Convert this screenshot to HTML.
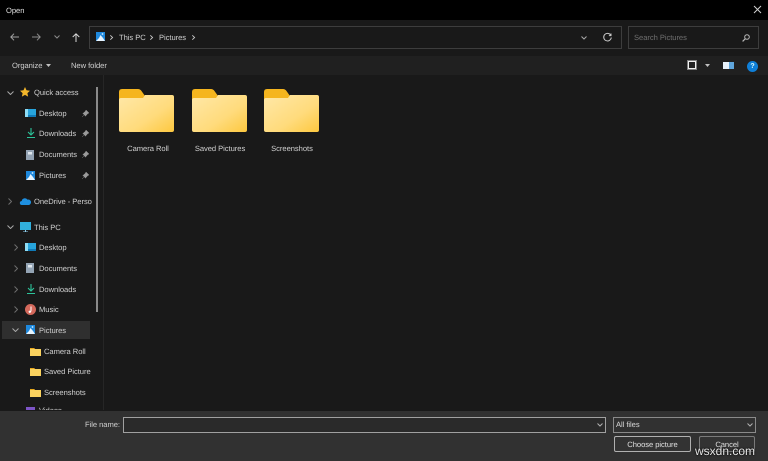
<!DOCTYPE html>
<html><head><meta charset="utf-8"><style>
html,body{margin:0;padding:0;background:#191919}
body{width:768px;height:461px;overflow:hidden;position:relative;font-family:"Liberation Sans",sans-serif;font-size:7.6px;letter-spacing:-.05px;text-rendering:geometricPrecision;color:#d0d0d0}
.a{position:absolute}
.t{position:absolute;white-space:nowrap;line-height:13.500px}
svg{position:absolute;overflow:visible}
</style></head><body>
<svg width="0" height="0" style="position:absolute"><defs>
<linearGradient id="fg" x1="0" y1="0" x2="1" y2="1"><stop offset="0" stop-color="#ffe8a8"/><stop offset=".6" stop-color="#ffdb7c"/><stop offset="1" stop-color="#fdc83f"/></linearGradient>
<symbol id="folder" viewBox="0 0 55 43"><path d="M0 3q0-3 3-3h16q2 0 3.500 2l3.500 5v5H0z" fill="#f5b51e"/><path d="M0 11q0-2 2-2h22l2-3h27q2 0 2 2v33q0 2-2 2H2q-2 0-2-2z" fill="url(#fg)"/></symbol>
<symbol id="sf" viewBox="0 0 11 9"><path d="M0 1h4l1 1h6v7H0z" fill="#fbd25f"/><path d="M0 1h4l1 1H0z" fill="#e9a91c"/></symbol>
<symbol id="desk" viewBox="0 0 11 8"><rect width="11" height="8" fill="#27a4dc"/><rect width="3" height="8" fill="#8edcf4"/><rect x="3" y="6" width="8" height="2" fill="#0f7ab8"/></symbol>
<symbol id="dl" viewBox="0 0 10 10"><path d="M5 0v7M2 4l3 3 3-3M1 9.500h8" fill="none" stroke="#2cc39a" stroke-width="1.100"/></symbol>
<symbol id="doc" viewBox="0 0 8 10"><rect width="8" height="10" fill="#94a4b4"/><rect x="2" y="2" width="4" height="2.500" fill="#dfe7ee"/></symbol>
<symbol id="pic" viewBox="0 0 9 9"><rect width="9" height="9" fill="#1e88dc"/><path d="M0 9l3-3 1.500-3L7 6l2 3z" fill="#e8f5ff"/><circle cx="6.500" cy="2" r=".9" fill="#cfeaff"/></symbol>
<symbol id="pin" viewBox="0 0 7 7"><path d="M4 0l3 3-1.300.6L4 5.500 3.600 6.200 .8 3.400 1.500 3 3.400 1.300zM2 5L0 7" fill="#9a9a9a" stroke="#9a9a9a" stroke-width=".4"/></symbol>
<symbol id="cd" viewBox="0 0 7 4"><path d="M.5 .5L3.500 3.500 6.500 .5" fill="none" stroke="#a8a8a8" stroke-width="1"/></symbol>
<symbol id="cr" viewBox="0 0 4 7"><path d="M.5 .5L3.500 3.500 .5 6.500" fill="none" stroke="#6d6d6d" stroke-width="1"/></symbol>
</defs></svg>

<!-- title -->
<div class="a" style="left:0;top:0;width:768px;height:20px;background:#000"></div>
<div class="t" style="left:6px;top:4px;color:#e0e0e0">Open</div>
<svg style="left:754px;top:6px" width="7" height="7"><path d="M0 0L7 7M7 0L0 7" stroke="#d0d0d0" stroke-width="1"/></svg>

<!-- nav row -->
<div class="a" style="left:0;top:20px;width:768px;height:36px;background:#191919"></div>
<svg style="left:10px;top:33px" width="9" height="8"><path d="M9 4H1M4 .7L.8 4 4 7.300" fill="none" stroke="#a0a0a0" stroke-width="1"/></svg>
<svg style="left:32px;top:33px" width="9" height="8"><path d="M0 4H8M5 .7L8.200 4 5 7.300" fill="none" stroke="#8c8c8c" stroke-width="1"/></svg>
<svg style="left:54px;top:35px" width="6" height="4"><path d="M.5 .5L3 3 5.500 .5" fill="none" stroke="#8c8c8c" stroke-width="1"/></svg>
<svg style="left:72px;top:33px" width="8" height="9"><path d="M4 9V1M.7 4L4 .8 7.300 4" fill="none" stroke="#d8d8d8" stroke-width="1"/></svg>
<div class="a" style="left:89px;top:26px;width:531px;height:21px;border:1px solid #3d3d3d;background:#191919"></div>
<svg style="left:96px;top:32px" width="9" height="9"><use href="#pic" width="9" height="9"/></svg>
<svg style="left:110px;top:35px" width="3" height="5"><path d="M.3 .3L2.600 2.500 .3 4.700" fill="none" stroke="#c8c8c8" stroke-width=".9"/></svg>
<div class="t" style="left:119px;top:31px">This PC</div>
<svg style="left:150px;top:35px" width="3" height="5"><path d="M.3 .3L2.600 2.500 .3 4.700" fill="none" stroke="#c8c8c8" stroke-width=".9"/></svg>
<div class="t" style="left:159px;top:31px">Pictures</div>
<svg style="left:192px;top:35px" width="3" height="5"><path d="M.3 .3L2.600 2.500 .3 4.700" fill="none" stroke="#c8c8c8" stroke-width=".9"/></svg>
<svg style="left:581px;top:36px" width="6" height="4"><path d="M.5 .5L3 3 5.500 .5" fill="none" stroke="#a8a8a8" stroke-width="1"/></svg>
<svg style="left:603px;top:33px" width="9" height="9"><path d="M7.800 2.200A3.800 3.800 0 1 0 8.300 4.500M8 .5V2.600H5.900" fill="none" stroke="#c8c8c8" stroke-width="1"/></svg>
<div class="a" style="left:628px;top:26px;width:129px;height:21px;border:1px solid #3d3d3d"></div>
<div class="t" style="left:634px;top:31px;color:#6f6f6f">Search Pictures</div>
<svg style="left:742px;top:34px" width="8" height="8"><circle cx="5" cy="3" r="2.300" fill="none" stroke="#b8b8b8"/><path d="M3.300 4.700L.6 7.400" stroke="#b8b8b8" stroke-width="1.200"/></svg>

<!-- toolbar -->
<div class="a" style="left:0;top:56px;width:768px;height:19px;background:#202020"></div>
<div class="t" style="left:12px;top:59px">Organize</div>
<svg style="left:46px;top:64px" width="5" height="3"><path d="M0 0H5L2.500 3z" fill="#c0c0c0"/></svg>
<div class="t" style="left:71px;top:59px">New folder</div>
<div class="a" style="left:688px;top:61px;width:6px;height:6px;border:1px solid #f0f0f0;background:#222;box-shadow:0 0 0 1px #808080"></div>
<svg style="left:705px;top:64px" width="5" height="3"><path d="M0 0H5L2.500 3z" fill="#c0c0c0"/></svg>
<div class="a" style="left:723px;top:62px;width:11px;height:7px;background:linear-gradient(90deg,#e8f2fb 0 55%,#5fa6dc 55%)"></div>
<div class="a" style="left:747px;top:61px;width:11px;height:11px;border-radius:50%;background:#0f7fd8;color:#dff;font:bold 7px/11px 'Liberation Sans',sans-serif;letter-spacing:0;text-align:center">?</div>

<!-- sidebar -->
<div class="a" style="left:103px;top:75px;width:1px;height:335px;background:#262626"></div>
<div class="a" style="left:96px;top:87px;width:1.500px;height:225px;background:#8a8a8a"></div>
<div class="a" style="left:2px;top:321px;width:88px;height:18px;background:#2f2f2f"></div>

<svg style="left:7px;top:91px" width="7" height="4"><use href="#cd" width="7" height="4"/></svg>
<svg style="left:20px;top:87px" width="10" height="10"><path d="M5 0l1.500 3.300 3.500.4-2.600 2.400.7 3.500L5 7.900 1.900 9.600l.7-3.500L0 3.700l3.500-.4z" fill="#f4b72b"/></svg>
<div class="t" style="left:34px;top:86px">Quick access</div>

<svg style="left:25px;top:109px" width="11" height="8"><use href="#desk" width="11" height="8"/></svg>
<div class="t" style="left:39px;top:107px">Desktop</div>
<svg style="left:82px;top:110px" width="7" height="7"><use href="#pin" width="7" height="7"/></svg>

<svg style="left:26px;top:128px" width="10" height="10"><use href="#dl" width="10" height="10"/></svg>
<div class="t" style="left:39px;top:127px">Downloads</div>
<svg style="left:82px;top:130px" width="7" height="7"><use href="#pin" width="7" height="7"/></svg>

<svg style="left:26px;top:150px" width="8" height="10"><use href="#doc" width="8" height="10"/></svg>
<div class="t" style="left:39px;top:148px">Documents</div>
<svg style="left:82px;top:151px" width="7" height="7"><use href="#pin" width="7" height="7"/></svg>

<svg style="left:26px;top:171px" width="9" height="9"><use href="#pic" width="9" height="9"/></svg>
<div class="t" style="left:39px;top:169px">Pictures</div>
<svg style="left:82px;top:172px" width="7" height="7"><use href="#pin" width="7" height="7"/></svg>

<svg style="left:8px;top:198px" width="4" height="7"><use href="#cr" width="4" height="7"/></svg>
<svg style="left:20px;top:197px" width="11" height="8"><path d="M2 8a2 2 0 0 1-.3-4A3.200 3.200 0 0 1 7.500 2.600 2.700 2.700 0 0 1 9 8z" fill="#1e8fe0"/></svg>
<div class="t" style="left:34px;top:195px">OneDrive - Perso</div>

<svg style="left:7px;top:225px" width="7" height="4"><use href="#cd" width="7" height="4"/></svg>
<svg style="left:20px;top:222px" width="11" height="11"><rect width="11" height="8" fill="#31b0dc"/><path d="M5 8h1v1.500h2V10H3v-.5h2z" fill="#8fd0ee"/></svg>
<div class="t" style="left:34px;top:221px">This PC</div>

<svg style="left:14px;top:244px" width="4" height="7"><use href="#cr" width="4" height="7"/></svg>
<svg style="left:25px;top:243px" width="11" height="8"><use href="#desk" width="11" height="8"/></svg>
<div class="t" style="left:39px;top:241px">Desktop</div>

<svg style="left:14px;top:265px" width="4" height="7"><use href="#cr" width="4" height="7"/></svg>
<svg style="left:26px;top:263px" width="8" height="10"><use href="#doc" width="8" height="10"/></svg>
<div class="t" style="left:39px;top:262px">Documents</div>

<svg style="left:14px;top:286px" width="4" height="7"><use href="#cr" width="4" height="7"/></svg>
<svg style="left:26px;top:284px" width="10" height="10"><use href="#dl" width="10" height="10"/></svg>
<div class="t" style="left:39px;top:283px">Downloads</div>

<svg style="left:14px;top:306px" width="4" height="7"><use href="#cr" width="4" height="7"/></svg>
<svg style="left:25px;top:304px" width="11" height="11"><circle cx="5.500" cy="5.500" r="5.500" fill="#d4695c"/><path d="M6 2.500V7.500" stroke="#fff" stroke-width="1"/><circle cx="4.800" cy="7.800" r="1.200" fill="#fff"/></svg>
<div class="t" style="left:39px;top:303px">Music</div>

<svg style="left:12px;top:328px" width="7" height="4"><use href="#cd" width="7" height="4"/></svg>
<svg style="left:26px;top:325px" width="9" height="9"><use href="#pic" width="9" height="9"/></svg>
<div class="t" style="left:39px;top:324px">Pictures</div>

<svg style="left:30px;top:347px" width="11" height="9"><use href="#sf" width="11" height="9"/></svg>
<div class="t" style="left:44px;top:345px">Camera Roll</div>
<svg style="left:30px;top:367px" width="11" height="9"><use href="#sf" width="11" height="9"/></svg>
<div class="t" style="left:44px;top:365px">Saved Picture</div>
<svg style="left:30px;top:388px" width="11" height="9"><use href="#sf" width="11" height="9"/></svg>
<div class="t" style="left:44px;top:386px">Screenshots</div>
<div class="a" style="left:26px;top:407px;width:9px;height:3px;background:#7d55c7"></div>
<div class="t" style="left:39px;top:406px;height:4px;overflow:hidden;line-height:10px">Videos</div>

<!-- folders -->
<svg style="left:119px;top:89px" width="55" height="43"><use href="#folder" width="55" height="43"/></svg>
<svg style="left:192px;top:89px" width="55" height="43"><use href="#folder" width="55" height="43"/></svg>
<svg style="left:264px;top:89px" width="55" height="43"><use href="#folder" width="55" height="43"/></svg>
<div class="t" style="left:110px;width:76px;text-align:center;top:142px">Camera Roll</div>
<div class="t" style="left:182px;width:76px;text-align:center;top:142px">Saved Pictures</div>
<div class="t" style="left:254px;width:76px;text-align:center;top:142px">Screenshots</div>

<!-- bottom -->
<div class="a" style="left:0;top:411px;width:768px;height:50px;background:#313131"></div>
<div class="t" style="left:85px;top:418px">File name:</div>
<div class="a" style="left:123px;top:417px;width:481px;height:14px;border:1px solid #a0a0a0;background:#2a2a2a"></div>
<svg style="left:597px;top:423px" width="6" height="4"><path d="M.5 .5L3 3 5.500 .5" fill="none" stroke="#b0b0b0" stroke-width="1"/></svg>
<div class="a" style="left:613px;top:417px;width:141px;height:14px;border:1px solid #8a8a8a"></div>
<div class="t" style="left:616px;top:418px;color:#d8d8d8">All files</div>
<svg style="left:747px;top:423px" width="6" height="4"><path d="M.5 .5L3 3 5.500 .5" fill="none" stroke="#b0b0b0" stroke-width="1"/></svg>
<div class="a" style="left:614px;top:436px;width:75px;height:14px;border:1px solid #b0b0b0;border-radius:2px;background:#333;text-align:center;line-height:15px;color:#e0e0e0">Choose picture</div>
<div class="a" style="left:699px;top:436px;width:54px;height:14px;border:1px solid #7a7a7a;border-radius:2px;background:#333;text-align:center;line-height:15px;color:#e0e0e0">Cancel</div>
<div class="t" style="left:695px;top:444px;font-size:12px;letter-spacing:0;line-height:15px;color:#e8e8e8;text-shadow:0 0 2px #000,0 0 1px #000">wsxdn.com</div>
</body></html>
